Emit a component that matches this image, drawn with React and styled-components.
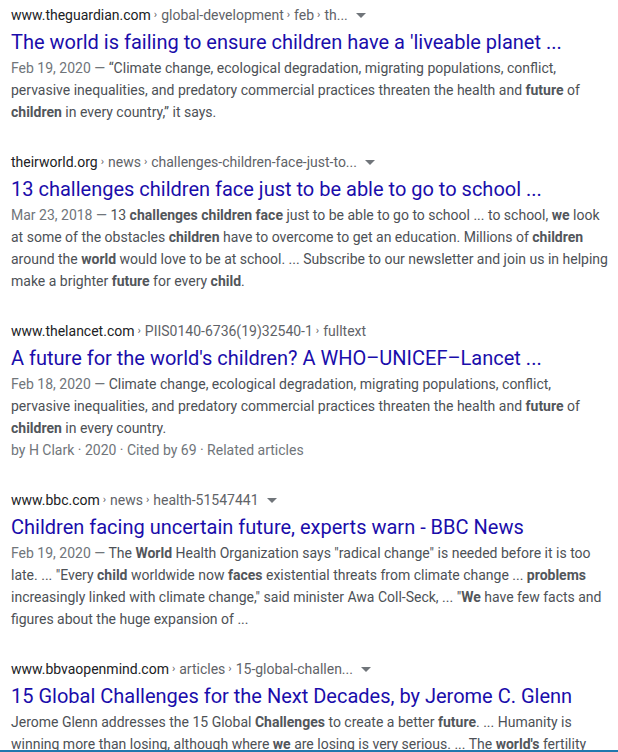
import React from "react";
import styled, { createGlobalStyle } from "styled-components";

const Global = createGlobalStyle`
  html, body { margin: 0; padding: 0; background: #fff; }
  body { font-family: Roboto, "Liberation Sans", Arial, sans-serif; overflow: hidden; }
`;

const Page = styled.div`
  padding: 5px 0 0 11px;
  width: 600px;
  display: flex;
  flex-direction: column;
  gap: 29px;
`;

const Result = styled.div`
  display: flex;
  flex-direction: column;
`;

const UrlLine = styled.div`
  display: flex;
  align-items: center;
  font-size: 14px;
  line-height: 20px;
  color: #202124;
  white-space: nowrap;
`;

const Crumbs = styled.span`
  color: #5f6368;
`;

const Sep = styled.span`
  color: #5f6368;
  font-size: 11px;
  margin: 0 4px 0 3px;
`;

const Arrow = styled.span`
  display: inline-block;
  width: 0;
  height: 0;
  margin-left: 8px;
  margin-top: 1px;
  border-left: 5px solid transparent;
  border-right: 5px solid transparent;
  border-top: 5px solid #70757a;
`;

const Title = styled.a`
  display: block;
  margin-top: 4px;
  font-size: 20px;
  line-height: 26px;
  color: #1a0dab;
  text-decoration: none;
  white-space: nowrap;
`;

const Snippet = styled.div`
  margin-top: 2px;
  font-size: 14px;
  line-height: 22px;
  color: #4d5156;
  b { font-weight: 700; color: #52565b; }
`;

const DateSpan = styled.span`
  color: #70757a;
`;

const Meta = styled.div`
  font-size: 14px;
  line-height: 22px;
  color: #70757a;
`;

const BottomLine = styled.div`
  position: fixed;
  left: 0;
  right: 0;
  bottom: 0;
  height: 2px;
  background: #1f78ae;
`;

function Url({ domain, parts, menu = true }) {
  return (
    <UrlLine>
      <span>{domain}</span>
      {parts.map((p, i) => (
        <React.Fragment key={i}>
          <Sep>›</Sep>
          <Crumbs>{p}</Crumbs>
        </React.Fragment>
      ))}
      {menu && <Arrow />}
    </UrlLine>
  );
}

export default function App() {
  return (
    <>
      <Global />
      <Page>
        <Result>
          <Url domain="www.theguardian.com" parts={["global-development", "feb", "th..."]} />
          <Title href="#">The world is failing to ensure children have a 'liveable planet ...</Title>
          <Snippet>
            <DateSpan>Feb 19, 2020 — </DateSpan>“Climate change, ecological degradation, migrating populations, conflict,
            pervasive inequalities, and predatory commercial practices threaten the health and <b>future</b> of{" "}
            <b>children</b> in every country,” it says.
          </Snippet>
        </Result>
        <Result>
          <Url domain="theirworld.org" parts={["news", "challenges-children-face-just-to..."]} />
          <Title href="#">13 challenges children face just to be able to go to school ...</Title>
          <Snippet>
            <DateSpan>Mar 23, 2018 — </DateSpan>13 <b>challenges children face</b> just to be able to go to school ... to
            school, <b>we</b> look at some of the obstacles <b>children</b> have to overcome to get an education. Millions
            of <b>children</b> around the <b>world</b> would love to be at school. ... Subscribe to our newsletter and
            join us in helping make a brighter <b>future</b> for every <b>child</b>.
          </Snippet>
        </Result>
        <Result>
          <Url domain="www.thelancet.com" parts={["PIIS0140-6736(19)32540-1", "fulltext"]} menu={false} />
          <Title href="#">A future for the world's children? A WHO–UNICEF–Lancet ...</Title>
          <Snippet>
            <DateSpan>Feb 18, 2020 — </DateSpan>Climate change, ecological degradation, migrating populations,
            conflict, pervasive inequalities, and predatory commercial practices threaten the health and{" "}
            <b>future</b> of <b>children</b> in every country.
          </Snippet>
          <Meta>by H Clark · 2020 · Cited by 69 · Related articles</Meta>
        </Result>
        <Result>
          <Url domain="www.bbc.com" parts={["news", "health-51547441"]} />
          <Title href="#">Children facing uncertain future, experts warn - BBC News</Title>
          <Snippet>
            <DateSpan>Feb 19, 2020 — </DateSpan>The <b>World</b> Health Organization says "radical change" is needed
            before it is too late. ... "Every <b>child</b> worldwide now <b>faces</b> existential threats from climate
            change ... <b>problems</b> increasingly linked with climate change," said minister Awa Coll-Seck, ... "
            <b>We</b> have few facts and figures about the huge expansion of ...
          </Snippet>
        </Result>
        <Result>
          <Url domain="www.bbvaopenmind.com" parts={["articles", "15-global-challen..."]} />
          <Title href="#">15 Global Challenges for the Next Decades, by Jerome C. Glenn</Title>
          <Snippet>
            Jerome Glenn addresses the 15 Global <b>Challenges</b> to create a better <b>future</b>. ... Humanity is
            winning more than losing, although where <b>we</b> are losing is very serious. ... The <b>world's</b>{" "}
            fertility rate has fallen.
          </Snippet>
        </Result>
      </Page>
      <BottomLine />
    </>
  );
}
